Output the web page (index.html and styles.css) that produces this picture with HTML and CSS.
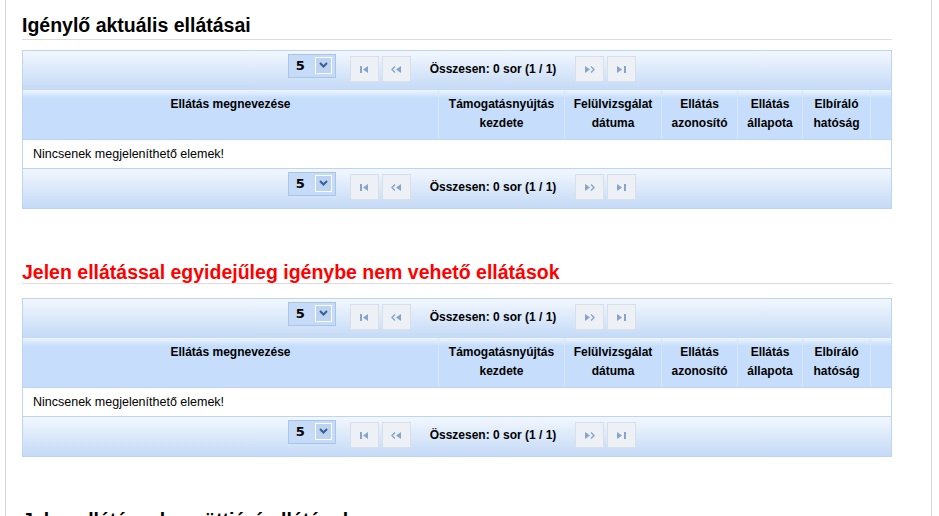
FILE: index.html
```html
<!DOCTYPE html>
<html lang="hu">
<head>
  <meta charset="UTF-8">
  <title>Ellátások</title>
  <link rel="stylesheet" href="styles.css">
</head>
<body>
  <div class="page">

    <div class="section">
      <h2 class="section-title">Igénylő aktuális ellátásai</h2>
      <div class="grid">
        <div class="pager">
          <div class="page-size"><span class="page-size-value">5</span><span class="page-size-arrow"><svg width="9" height="6" viewBox="0 0 9 6"><path d="M1 1 L4.5 4.5 L8 1" fill="none" stroke="#3c5f92" stroke-width="2"/></svg></span></div>
          <span class="pg-btn"><svg width="9" height="7" viewBox="0 0 9 7"><rect x="0" y="0" width="2" height="7" fill="#86a5cd"/><path d="M3 3.5 L8 0 L8 7 Z" fill="#86a5cd"/></svg></span>
          <span class="pg-btn"><svg width="11" height="7" viewBox="0 0 11 7"><path d="M4 0.5 L1 3.5 L4 6.5" fill="none" stroke="#86a5cd" stroke-width="1.4"/><path d="M5 3.5 L10 0 L10 7 Z" fill="#86a5cd"/></svg></span>
          <span class="pager-info">Összesen: 0 sor (1 / 1)</span>
          <span class="pg-btn"><svg width="11" height="7" viewBox="0 0 11 7"><path d="M1 0 L6 3.5 L1 7 Z" fill="#86a5cd"/><path d="M7 0.5 L10 3.5 L7 6.5" fill="none" stroke="#86a5cd" stroke-width="1.4"/></svg></span>
          <span class="pg-btn"><svg width="9" height="7" viewBox="0 0 9 7"><path d="M0 0 L5 3.5 L0 7 Z" fill="#86a5cd"/><rect x="7" y="0" width="2" height="7" fill="#86a5cd"/></svg></span>
        </div>
        <div class="grid-head">
          <div class="col c-name">Ellátás megnevezése</div>
          <div class="col c-start">Támogatásnyújtás<br>kezdete</div>
          <div class="col c-review">Felülvizsgálat<br>dátuma</div>
          <div class="col c-id">Ellátás<br>azonosító</div>
          <div class="col c-state">Ellátás<br>állapota</div>
          <div class="col c-auth">Elbíráló<br>hatóság</div>
          <div class="col c-fill"></div>
        </div>
        <div class="grid-empty">Nincsenek megjeleníthető elemek!</div>
        <div class="pager">
          <div class="page-size"><span class="page-size-value">5</span><span class="page-size-arrow"><svg width="9" height="6" viewBox="0 0 9 6"><path d="M1 1 L4.5 4.5 L8 1" fill="none" stroke="#3c5f92" stroke-width="2"/></svg></span></div>
          <span class="pg-btn"><svg width="9" height="7" viewBox="0 0 9 7"><rect x="0" y="0" width="2" height="7" fill="#86a5cd"/><path d="M3 3.5 L8 0 L8 7 Z" fill="#86a5cd"/></svg></span>
          <span class="pg-btn"><svg width="11" height="7" viewBox="0 0 11 7"><path d="M4 0.5 L1 3.5 L4 6.5" fill="none" stroke="#86a5cd" stroke-width="1.4"/><path d="M5 3.5 L10 0 L10 7 Z" fill="#86a5cd"/></svg></span>
          <span class="pager-info">Összesen: 0 sor (1 / 1)</span>
          <span class="pg-btn"><svg width="11" height="7" viewBox="0 0 11 7"><path d="M1 0 L6 3.5 L1 7 Z" fill="#86a5cd"/><path d="M7 0.5 L10 3.5 L7 6.5" fill="none" stroke="#86a5cd" stroke-width="1.4"/></svg></span>
          <span class="pg-btn"><svg width="9" height="7" viewBox="0 0 9 7"><path d="M0 0 L5 3.5 L0 7 Z" fill="#86a5cd"/><rect x="7" y="0" width="2" height="7" fill="#86a5cd"/></svg></span>
        </div>
      </div>
    </div>

    <div class="section section-second">
      <h2 class="section-title title-warning">Jelen ellátással egyidejűleg igénybe nem vehető ellátások</h2>
      <div class="grid">
        <div class="pager">
          <div class="page-size"><span class="page-size-value">5</span><span class="page-size-arrow"><svg width="9" height="6" viewBox="0 0 9 6"><path d="M1 1 L4.5 4.5 L8 1" fill="none" stroke="#3c5f92" stroke-width="2"/></svg></span></div>
          <span class="pg-btn"><svg width="9" height="7" viewBox="0 0 9 7"><rect x="0" y="0" width="2" height="7" fill="#86a5cd"/><path d="M3 3.5 L8 0 L8 7 Z" fill="#86a5cd"/></svg></span>
          <span class="pg-btn"><svg width="11" height="7" viewBox="0 0 11 7"><path d="M4 0.5 L1 3.5 L4 6.5" fill="none" stroke="#86a5cd" stroke-width="1.4"/><path d="M5 3.5 L10 0 L10 7 Z" fill="#86a5cd"/></svg></span>
          <span class="pager-info">Összesen: 0 sor (1 / 1)</span>
          <span class="pg-btn"><svg width="11" height="7" viewBox="0 0 11 7"><path d="M1 0 L6 3.5 L1 7 Z" fill="#86a5cd"/><path d="M7 0.5 L10 3.5 L7 6.5" fill="none" stroke="#86a5cd" stroke-width="1.4"/></svg></span>
          <span class="pg-btn"><svg width="9" height="7" viewBox="0 0 9 7"><path d="M0 0 L5 3.5 L0 7 Z" fill="#86a5cd"/><rect x="7" y="0" width="2" height="7" fill="#86a5cd"/></svg></span>
        </div>
        <div class="grid-head">
          <div class="col c-name">Ellátás megnevezése</div>
          <div class="col c-start">Támogatásnyújtás<br>kezdete</div>
          <div class="col c-review">Felülvizsgálat<br>dátuma</div>
          <div class="col c-id">Ellátás<br>azonosító</div>
          <div class="col c-state">Ellátás<br>állapota</div>
          <div class="col c-auth">Elbíráló<br>hatóság</div>
          <div class="col c-fill"></div>
        </div>
        <div class="grid-empty">Nincsenek megjeleníthető elemek!</div>
        <div class="pager">
          <div class="page-size"><span class="page-size-value">5</span><span class="page-size-arrow"><svg width="9" height="6" viewBox="0 0 9 6"><path d="M1 1 L4.5 4.5 L8 1" fill="none" stroke="#3c5f92" stroke-width="2"/></svg></span></div>
          <span class="pg-btn"><svg width="9" height="7" viewBox="0 0 9 7"><rect x="0" y="0" width="2" height="7" fill="#86a5cd"/><path d="M3 3.5 L8 0 L8 7 Z" fill="#86a5cd"/></svg></span>
          <span class="pg-btn"><svg width="11" height="7" viewBox="0 0 11 7"><path d="M4 0.5 L1 3.5 L4 6.5" fill="none" stroke="#86a5cd" stroke-width="1.4"/><path d="M5 3.5 L10 0 L10 7 Z" fill="#86a5cd"/></svg></span>
          <span class="pager-info">Összesen: 0 sor (1 / 1)</span>
          <span class="pg-btn"><svg width="11" height="7" viewBox="0 0 11 7"><path d="M1 0 L6 3.5 L1 7 Z" fill="#86a5cd"/><path d="M7 0.5 L10 3.5 L7 6.5" fill="none" stroke="#86a5cd" stroke-width="1.4"/></svg></span>
          <span class="pg-btn"><svg width="9" height="7" viewBox="0 0 9 7"><path d="M0 0 L5 3.5 L0 7 Z" fill="#86a5cd"/><rect x="7" y="0" width="2" height="7" fill="#86a5cd"/></svg></span>
        </div>
      </div>
    </div>

    <div class="section section-third">
      <h2 class="section-title">Jelen ellátással együttjáró ellátások</h2>
    </div>

  </div>
</body>
</html>
```

FILE: styles.css
```css
body {
  margin: 0;
  font-family: "Liberation Sans", Arial, sans-serif;
  background: #ffffff;
  color: #000000;
  overflow: hidden;
}

.page {
  box-sizing: border-box;
  width: 927px;
  min-height: 100vh;
  margin-left: 5px;
  padding: 14px 39px 0 16px;
  border-left: 1px solid #d6d6d6;
  border-right: 1px solid #d6d6d6;
}

.section-title {
  margin: 0;
  font-size: 19.5px;
  font-weight: bold;
  line-height: 22px;
  padding-bottom: 3px;
  border-bottom: 1px solid #dcdcdc;
}

.title-warning {
  color: #ff0000;
  padding-bottom: 0;
}

.section-second {
  margin-top: 52px;
}

.section-third {
  margin-top: 52px;
}

.grid {
  margin-top: 10px;
  border: 1px solid #bcd5f5;
  width: 868px;
}

.section-second .grid {
  margin-top: 14px;
}

/* pager bar */
.pager {
  box-sizing: border-box;
  height: 39px;
  display: flex;
  align-items: center;
  justify-content: center;
  padding: 0 0 3px 13px;
  background: linear-gradient(#f2f7fe, #c4daf6);
}

.page-size {
  box-sizing: border-box;
  width: 48px;
  height: 24px;
  display: flex;
  align-items: center;
  justify-content: space-between;
  padding: 0 3px 2px 7px;
  margin-right: 14px;
  margin-top: -6px;
  background: #c6dbf7;
  border: 1px solid #aac5ea;
}

.page-size-value {
  font-family: "DejaVu Sans", sans-serif;
  font-weight: bold;
  font-size: 13px;
}

.page-size-arrow {
  box-sizing: border-box;
  width: 17px;
  height: 17px;
  display: flex;
  align-items: center;
  justify-content: center;
  background: #bcd3f1;
  border: 1px solid #ffffff;
}

.pg-btn {
  box-sizing: border-box;
  width: 29px;
  height: 26px;
  display: flex;
  align-items: center;
  justify-content: center;
  background: #edf0f4;
  border: 1px solid #d7dfea;
  margin-right: 3px;
}

.pager-info {
  font-size: 12px;
  font-weight: bold;
  margin: 0 19px 0 16px;
}

/* header row */
.grid-head {
  display: flex;
  height: 49px;
  background: linear-gradient(#eef5fe 0, #c6defb 8px, #c6defb 100%);
  border-bottom: 1px solid #bcd5f5;
}

.col {
  box-sizing: border-box;
  padding-top: 5px;
  font-size: 12px;
  font-weight: bold;
  line-height: 19px;
  text-align: center;
  border-right: 1px solid #d6e6fb;
}

.c-name { width: 416px; }
.c-start { width: 126px; }
.c-review { width: 97px; }
.c-id { width: 76px; }
.c-state { width: 65px; }
.c-auth { width: 68px; }
.c-fill { width: 20px; border-right: none; }

.grid-empty {
  height: 28px;
  line-height: 28px;
  padding-left: 10px;
  font-size: 12.5px;
  background: #ffffff;
  border-bottom: 1px solid #bcd5f5;
}
```
